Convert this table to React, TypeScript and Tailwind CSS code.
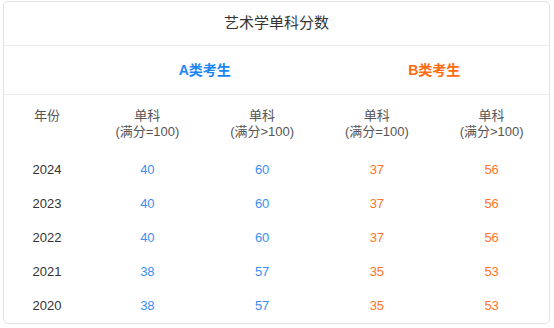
const ROWS = [
  { year: "2024", a1: 40, a2: 60, b1: 37, b2: 56 },
  { year: "2023", a1: 40, a2: 60, b1: 37, b2: 56 },
  { year: "2022", a1: 40, a2: 60, b1: 37, b2: 56 },
  { year: "2021", a1: 38, a2: 57, b1: 35, b2: 53 },
  { year: "2020", a1: 38, a2: 57, b1: 35, b2: 53 },
];

const FONT = "font-['Liberation_Sans','Noto_Sans_CJK_SC',sans-serif]";
const GRID = "grid grid-cols-[86px_1fr_1fr_1fr_1fr]";

function SubjectHead({ sign }: { sign: string }) {
  return (
    <div className="flex flex-col items-center leading-[16px] text-[#555]">
      <span>单科</span>
      <span>(满分{sign}100)</span>
    </div>
  );
}

export default function App() {
  return (
    <div className={`${FONT} min-h-[328px] bg-white pl-[3px] pt-[1px]`}>
      <div className="w-[547px] rounded-[5px] border border-[#e3e3e3] bg-white">
        <div className="flex h-[43px] items-center justify-center text-[15px] text-[#333]">
          艺术学单科分数
        </div>
        <div className={`${GRID} h-[49px] items-center border-t border-[#ececec] text-[14px] font-bold`}>
          <div />
          <div className="col-span-2 text-center text-[#1a86f5]">A类考生</div>
          <div className="col-span-2 text-center text-[#ff6a0d]">B类考生</div>
        </div>
        <div className={`${GRID} h-[59px] items-start border-t border-[#ececec] pt-[13px] text-[13px]`}>
          <div className="text-center leading-[16px] text-[#555]">年份</div>
          <SubjectHead sign="=" />
          <SubjectHead sign=">" />
          <SubjectHead sign="=" />
          <SubjectHead sign=">" />
        </div>
        {ROWS.map(r => (
          <div key={r.year} className={`${GRID} h-[34px] items-center text-[13px]`}>
            <div className="text-center text-[#333]">{r.year}</div>
            <div className="text-center text-[#3990f2]">{r.a1}</div>
            <div className="text-center text-[#3990f2]">{r.a2}</div>
            <div className="text-center text-[#ff7426]">{r.b1}</div>
            <div className="text-center text-[#ff7426]">{r.b2}</div>
          </div>
        ))}
      </div>
    </div>
  );
}
